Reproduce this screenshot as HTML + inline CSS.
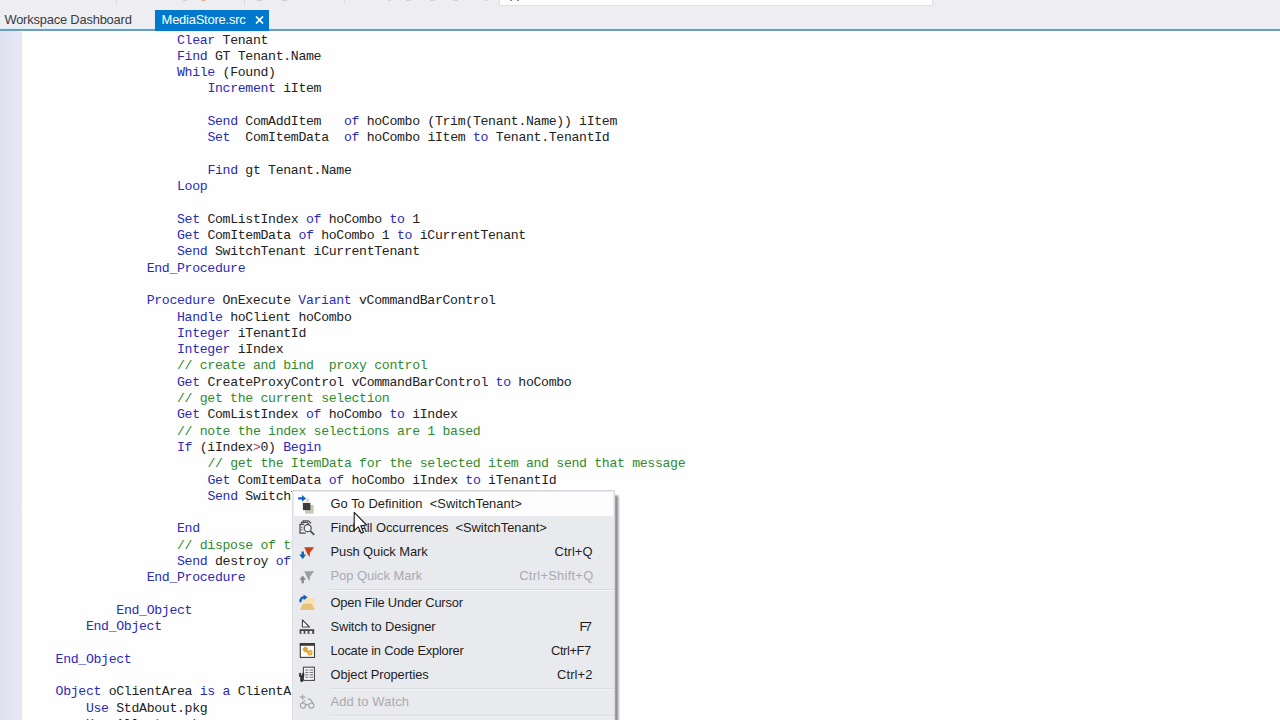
<!DOCTYPE html>
<html lang="en">
<head>
<meta charset="utf-8">
<title>MediaStore.src</title>
<style>
html,body{margin:0;padding:0}
body{width:1280px;height:720px;overflow:hidden;background:#fefefe;position:relative;font-family:"Liberation Sans",sans-serif}
#top{position:absolute;left:0;top:0;width:1280px;height:29px;background:#eeeef2}
#tline{position:absolute;left:0;top:28px;width:1280px;height:3px;background:linear-gradient(#d4eefa 0,#d4eefa 1px,#6f9cb8 1px,#6f9cb8 3px)}
#tbox{position:absolute;left:499px;top:-4px;width:432px;height:8px;background:#fdfdfd;border:1px solid #e2e2e6}
#marks i{position:absolute;display:block}
#margin{position:absolute;left:0;top:31px;width:22px;height:689px;background:linear-gradient(90deg,#dfe1f1,#e7e8f4)}
#tab1{position:absolute;left:4.4px;top:10px;height:19px;line-height:19px;font-size:12.9px;letter-spacing:-0.19px;color:#3a3a40;white-space:nowrap}
#tab2{position:absolute;left:155px;top:10px;width:114px;height:21px;background:#0078ce}
#tab2 .t{position:absolute;left:6.6px;top:0;height:19px;line-height:19px;font-size:12.9px;letter-spacing:-0.2px;color:#fff;white-space:nowrap}
#tab2 svg{position:absolute;left:100px;top:6px}
.ln{position:absolute;white-space:pre;font-family:"Liberation Mono",monospace;font-size:13.2px;letter-spacing:-0.3293px;line-height:16px;height:16px;color:#222}
.k{color:#2a2ab8}
.c{color:#2e8b2e}
.o{color:#d24040}
#menu{position:absolute;left:292px;top:490px;width:323px;height:240px;background:#e9eaee;border:1px solid #d4d4da;border-left-color:#dedee5;border-right-color:#d8d8de;box-sizing:border-box}
#shadow{position:absolute;left:615px;top:494px;width:5px;height:230px;background:linear-gradient(90deg,#a8a8ae 0,#8c8c94 28%,#b6b6bc 60%,rgba(254,254,254,0) 100%)}
#shadow:before{content:"";position:absolute;left:0;top:0;width:5px;height:3px;background:linear-gradient(#fefefe,rgba(254,254,254,0))}
#hl{position:absolute;left:293.5px;top:491.7px;width:319.2px;height:23.9px;background:#fdfdfd}
.mi{position:absolute;left:0;width:640px;height:24px;line-height:24px;font-size:12.9px;color:#1e1e1e;white-space:nowrap}
.mi .lbl{position:absolute;top:0}
.mi .key{position:absolute;top:0}
.mi.dis{color:#a9a9ae}
.sep{position:absolute;left:330px;width:284px;height:1px;background:#d9dade;box-shadow:0 1px 0 #f2f3f7}
.ic{position:absolute}
#cursor{position:absolute;left:353px;top:511.3px}
</style>
</head>
<body>
<div id="top"></div>
<div id="tbox"></div>
<div id="marks">
<i style="left:116px;top:0;width:1px;height:5px;background:#dcdce0"></i>
<i style="left:244px;top:0;width:1px;height:5px;background:#d8d8dc"></i>
<i style="left:344px;top:0;width:1px;height:4px;background:#e0e0e4"></i>
<i style="left:201px;top:-3px;width:5px;height:4px;border-radius:2px;background:#f2a488"></i>
<i style="left:183px;top:0;width:4px;height:1px;background:#d0d0d4"></i>
<i style="left:257px;top:0;width:5px;height:1px;background:#d0d0d4"></i>
<i style="left:282px;top:0;width:5px;height:1px;background:#d0d0d4"></i>
<i style="left:388px;top:0;width:3px;height:1px;background:#d6d6da"></i>
<i style="left:406px;top:0;width:5px;height:1px;background:#d2d2d6"></i>
<i style="left:430px;top:0;width:5px;height:1px;background:#d2d2d6"></i>
<i style="left:453px;top:0;width:5px;height:1px;background:#d2d2d6"></i>
<i style="left:485px;top:0;width:3px;height:1px;background:#d6d6da"></i>
<i style="left:510px;top:0;width:2px;height:1px;background:#8a8a90"></i>
<i style="left:517px;top:0;width:2px;height:1px;background:#8a8a90"></i>
</div>
<div id="tline"></div>
<div id="tab1">Workspace Dashboard</div>
<div id="tab2"><span class="t">MediaStore.src</span>
<svg width="9" height="8" viewBox="0 0 9 8"><path d="M1 0.5 L8 7.5 M8 0.5 L1 7.5" stroke="#fff" stroke-width="1.7" fill="none"/></svg>
</div>
<div id="margin"></div>
<div id="code">
<div class="ln" style="left:177.04px;top:32.60px"><span class="k">Clear</span> Tenant</div>
<div class="ln" style="left:177.04px;top:48.89px"><span class="k">Find</span> GT Tenant.Name</div>
<div class="ln" style="left:177.04px;top:65.19px"><span class="k">While</span> (Found)</div>
<div class="ln" style="left:207.41px;top:81.48px"><span class="k">Increment</span> iItem</div>
<div class="ln" style="left:207.41px;top:114.06px"><span class="k">Send</span> ComAddItem   <span class="k">of</span> hoCombo (Trim(Tenant.Name)) iItem</div>
<div class="ln" style="left:207.41px;top:130.36px"><span class="k">Set</span>  ComItemData  <span class="k">of</span> hoCombo iItem <span class="k">to</span> Tenant.TenantId</div>
<div class="ln" style="left:207.41px;top:162.94px"><span class="k">Find</span> gt Tenant.Name</div>
<div class="ln" style="left:177.04px;top:179.24px"><span class="k">Loop</span></div>
<div class="ln" style="left:177.04px;top:211.82px"><span class="k">Set</span> ComListIndex <span class="k">of</span> hoCombo <span class="k">to</span> 1</div>
<div class="ln" style="left:177.04px;top:228.12px"><span class="k">Get</span> ComItemData <span class="k">of</span> hoCombo 1 <span class="k">to</span> iCurrentTenant</div>
<div class="ln" style="left:177.04px;top:244.41px"><span class="k">Send</span> SwitchTenant iCurrentTenant</div>
<div class="ln" style="left:146.67px;top:260.70px"><span class="k">End_Procedure</span></div>
<div class="ln" style="left:146.67px;top:293.29px"><span class="k">Procedure</span> OnExecute <span class="k">Variant</span> vCommandBarControl</div>
<div class="ln" style="left:177.04px;top:309.58px"><span class="k">Handle</span> hoClient hoCombo</div>
<div class="ln" style="left:177.04px;top:325.87px"><span class="k">Integer</span> iTenantId</div>
<div class="ln" style="left:177.04px;top:342.17px"><span class="k">Integer</span> iIndex</div>
<div class="ln" style="left:177.04px;top:358.46px"><span class="c">// create and bind  proxy control</span></div>
<div class="ln" style="left:177.04px;top:374.75px"><span class="k">Get</span> CreateProxyControl vCommandBarControl <span class="k">to</span> hoCombo</div>
<div class="ln" style="left:177.04px;top:391.05px"><span class="c">// get the current selection</span></div>
<div class="ln" style="left:177.04px;top:407.34px"><span class="k">Get</span> ComListIndex <span class="k">of</span> hoCombo <span class="k">to</span> iIndex</div>
<div class="ln" style="left:177.04px;top:423.63px"><span class="c">// note the index selections are 1 based</span></div>
<div class="ln" style="left:177.04px;top:439.93px"><span class="k">If</span> (iIndex<span class="o">&gt;</span>0) <span class="k">Begin</span></div>
<div class="ln" style="left:207.41px;top:456.22px"><span class="c">// get the ItemData for the selected item and send that message</span></div>
<div class="ln" style="left:207.41px;top:472.51px"><span class="k">Get</span> ComItemData <span class="k">of</span> hoCombo iIndex <span class="k">to</span> iTenantId</div>
<div class="ln" style="left:207.41px;top:488.80px"><span class="k">Send</span> SwitchTenant iTenantId</div>
<div class="ln" style="left:177.04px;top:521.39px"><span class="k">End</span></div>
<div class="ln" style="left:177.04px;top:537.68px"><span class="c">// dispose of the proxy control</span></div>
<div class="ln" style="left:177.04px;top:553.98px"><span class="k">Send</span> destroy <span class="k">of</span> hoCombo</div>
<div class="ln" style="left:146.67px;top:570.27px"><span class="k">End_Procedure</span></div>
<div class="ln" style="left:116.30px;top:602.86px"><span class="k">End_Object</span></div>
<div class="ln" style="left:85.94px;top:619.15px"><span class="k">End_Object</span></div>
<div class="ln" style="left:55.57px;top:651.73px"><span class="k">End_Object</span></div>
<div class="ln" style="left:55.57px;top:684.32px"><span class="k">Object</span> oClientArea <span class="k">is</span> <span class="k">a</span> ClientArea</div>
<div class="ln" style="left:85.94px;top:700.61px"><span class="k">Use</span> StdAbout.pkg</div>
<div class="ln" style="left:85.94px;top:716.91px"><span class="k">Use</span> Allentry.pkg</div>
</div>
<div id="menu"></div>
<div id="shadow"></div>
<div id="hl"></div>
<div class="mi" style="top:491.5px"><span class="lbl" style="left:330.50px;letter-spacing:0.032px">Go To Definition&nbsp; &lt;SwitchTenant&gt;</span></div>
<div class="mi" style="top:515.5px"><span class="lbl" style="left:330.50px;letter-spacing:-0.046px">Find All Occurrences&nbsp; &lt;SwitchTenant&gt;</span></div>
<div class="mi" style="top:539.5px"><span class="lbl" style="left:330.50px;letter-spacing:-0.071px">Push Quick Mark</span><span class="key" style="left:554.50px;letter-spacing:0.080px">Ctrl+Q</span></div>
<div class="mi dis" style="top:563.5px"><span class="lbl" style="left:330.50px;letter-spacing:0.000px">Pop Quick Mark</span><span class="key" style="left:519.25px;letter-spacing:0.273px">Ctrl+Shift+Q</span></div>
<div class="sep" style="top:588.5px"></div>
<div class="mi" style="top:590.5px"><span class="lbl" style="left:330.50px;letter-spacing:-0.210px">Open File Under Cursor</span></div>
<div class="mi" style="top:614.5px"><span class="lbl" style="left:330.50px;letter-spacing:-0.141px">Switch to Designer</span><span class="key" style="left:579.50px;letter-spacing:-2.600px">F7</span></div>
<div class="mi" style="top:638.5px"><span class="lbl" style="left:330.50px;letter-spacing:-0.227px">Locate in Code Explorer</span><span class="key" style="left:551.00px;letter-spacing:-0.400px">Ctrl+F7</span></div>
<div class="mi" style="top:662.5px"><span class="lbl" style="left:330.50px;letter-spacing:-0.088px">Object Properties</span><span class="key" style="left:557.00px;letter-spacing:0.120px">Ctrl+2</span></div>
<div class="sep" style="top:687.5px"></div>
<div class="mi dis" style="top:689.5px"><span class="lbl" style="left:330.50px;letter-spacing:0.145px">Add to Watch</span></div>
<div class="sep" style="top:714.5px"></div>
<!-- 1 go to definition -->
<svg class="ic" style="left:297px;top:494px" width="19" height="21" viewBox="0 0 19 21">
<rect x="8" y="11" width="8.6" height="8.6" fill="#c9c6b8"/>
<path d="M9 4.5 L12 4.5 L12 8 L9.5 8 Z" fill="#d8d6d2"/>
<rect x="5.9" y="8.9" width="7.5" height="7.2" fill="#3c3c40"/>
<path d="M1.2 3.3 H5 V1.1 L9 4.4 L5 7.7 V5.5 H1.2 Z" fill="#0f62c0"/>
</svg>
<!-- 2 find all -->
<svg class="ic" style="left:298px;top:519px" width="19" height="18" viewBox="0 0 19 18">
<g fill="none" stroke="#4e4e52" stroke-width="1.25">
<path d="M5.2 3.2 V1.8 H10.5 L13 4.3"/>
<path d="M3.5 4.8 V3.4 H9 L11.3 5.6"/>
<path d="M6.2 5.3 H2 V14.2 H7.8"/>
<circle cx="9.7" cy="9.2" r="3.5" fill="#f2f2f5"/>
<path d="M12.3 11.9 L16.2 15.8" stroke-width="1.7"/>
</g>
<rect x="3.3" y="7.6" width="1.2" height="1.2" fill="#58585c"/><rect x="3.3" y="10" width="1.2" height="1.2" fill="#58585c"/>
</svg>
<!-- 3 push quick mark -->
<svg class="ic" style="left:298px;top:546px" width="19" height="15" viewBox="0 0 19 15">
<path d="M6.2 1.2 H16.2 L12 6.6 L11.6 10.9 L9.7 8.4 Z" fill="#c8401c"/>
<path d="M3.5 5.4 H5.9 V8.6 H8.1 L4.7 13 L1.3 8.6 H3.5 Z" fill="#0f5db8"/>
</svg>
<!-- 4 pop quick mark -->
<svg class="ic" style="left:298px;top:570px" width="19" height="15" viewBox="0 0 19 15">
<path d="M6.2 1.2 H16.2 L12 6.6 L11.6 10.9 L9.7 8.4 Z" fill="#9c9ca2"/>
<path d="M3.5 13.2 H5.9 V9.8 H8.1 L4.7 5.4 L1.3 9.8 H3.5 Z" fill="#88888e"/>
</svg>
<!-- 5 open file -->
<svg class="ic" style="left:298px;top:594px" width="19" height="18" viewBox="0 0 19 18">
<path d="M6.8 4 H16.7 V15.8 H4 V9.8 H6.8 Z" fill="#f5e1b4"/>
<path d="M2 16 L4.9 9.8 H13.7 L16.8 16 Z" fill="#e8c278"/>
<path d="M2.6 8.2 C2 4.6 4.2 3 6.4 3.4" fill="none" stroke="#1160c0" stroke-width="2.2"/>
<path d="M5.6 0.4 L9.6 3.3 L5.6 6.3 Z" fill="#1160c0"/>
</svg>
<!-- 6 switch to designer -->
<svg class="ic" style="left:298px;top:618px" width="19" height="18" viewBox="0 0 19 18">
<path d="M4.4 1.8 V9 H11.4 Z" fill="#fafafa" stroke="#48484c" stroke-width="1.1" stroke-linejoin="round"/>
<rect x="1.6" y="11.2" width="14.6" height="4.6" fill="#48484c"/>
<rect x="3.4" y="13" width="2.2" height="2.8" fill="#f4f4f6"/><rect x="7.4" y="13" width="2.2" height="2.8" fill="#f4f4f6"/><rect x="11.4" y="13" width="2.8" height="2.8" fill="#f4f4f6"/>
</svg>
<!-- 7 locate in code explorer -->
<svg class="ic" style="left:298px;top:642px" width="19" height="18" viewBox="0 0 19 18">
<rect x="2.3" y="1.6" width="14.2" height="13.8" fill="#fcfcfc" stroke="#3c3c40" stroke-width="1.1"/>
<rect x="1.8" y="1" width="15.2" height="2.8" fill="#3c3c40"/>
<path d="M4.4 7 L7 4.6 L10 6 L9.6 8.2 L11 8.8 L12.4 7.6 L14.6 9.4 L14.2 13 L10.6 13.6 L9.2 10.8 L6 9.8 Z" fill="#e2a432"/>
<circle cx="12.3" cy="10.7" r="1" fill="#f6d890"/>
</svg>
<!-- 8 object properties -->
<svg class="ic" style="left:298px;top:665px" width="19" height="19" viewBox="0 0 19 19">
<rect x="5.4" y="2.2" width="11" height="13.2" fill="#fafafa" stroke="#48484c" stroke-width="1.1"/>
<g stroke="#6a6a70" stroke-width="1"><path d="M7.2 5 H15 M7.2 7.4 H15 M7.2 9.8 H15 M7.2 12.2 H15"/></g>
<path d="M11 3.5 V14.5" stroke="#fafafa" stroke-width="1"/>
<path d="M1.4 8.2 V11.2 L2.6 12.6 V16.2 Q3.7 17.2 4.8 16.2 V12.6 L6 11.2 V8.2 H4.6 V10.4 H2.8 V8.2 Z" fill="#2a2a2e" stroke="#2a2a2e" stroke-width=".6"/>
</svg>
<!-- 9 add to watch -->
<svg class="ic" style="left:298px;top:693px" width="19" height="18" viewBox="0 0 19 18">
<g fill="none" stroke="#a4a4aa" stroke-width="1.2">
<path d="M4.6 1.4 V7 M1.8 4.2 H7.4"/>
<circle cx="4.9" cy="12.6" r="2.6"/><circle cx="13.3" cy="12.6" r="2.6"/>
<path d="M7.5 12 Q9.1 10.8 10.7 12"/>
<path d="M9.6 5.8 L12.2 6.4 L15.9 11.6"/>
<path d="M7.2 7.4 L3.4 10.6"/>
</g>
</svg>

<svg id="cursor" width="18" height="26" viewBox="0 0 18 26"><path d="M1.2 1.3 L1.2 19.6 L5.3 15.8 L8.2 22.2 L10.5 21.2 L7.8 14.9 L13.6 14 Z" fill="#fdfdfd" stroke="#1c1c1c" stroke-width="1.1" stroke-linejoin="round"/></svg>
</body>
</html>
